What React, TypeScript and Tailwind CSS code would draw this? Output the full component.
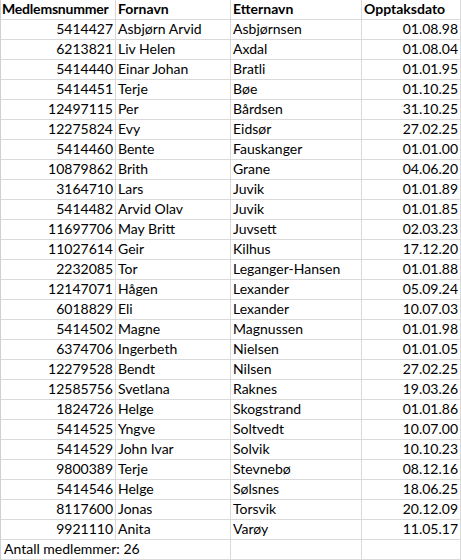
import React from 'react';

type Member = {
    id: string;
    first: string;
    last: string;
    joined: string;
};

const members: Member[] = [
    { id: '5414427', first: 'Asbjørn Arvid', last: 'Asbjørnsen', joined: '01.08.98' },
    { id: '6213821', first: 'Liv Helen', last: 'Axdal', joined: '01.08.04' },
    { id: '5414440', first: 'Einar Johan', last: 'Bratli', joined: '01.01.95' },
    { id: '5414451', first: 'Terje', last: 'Bøe', joined: '01.10.25' },
    { id: '12497115', first: 'Per', last: 'Bårdsen', joined: '31.10.25' },
    { id: '12275824', first: 'Evy', last: 'Eidsør', joined: '27.02.25' },
    { id: '5414460', first: 'Bente', last: 'Fauskanger', joined: '01.01.00' },
    { id: '10879862', first: 'Brith', last: 'Grane', joined: '04.06.20' },
    { id: '3164710', first: 'Lars', last: 'Juvik', joined: '01.01.89' },
    { id: '5414482', first: 'Arvid Olav', last: 'Juvik', joined: '01.01.85' },
    { id: '11697706', first: 'May Britt', last: 'Juvsett', joined: '02.03.23' },
    { id: '11027614', first: 'Geir', last: 'Kilhus', joined: '17.12.20' },
    { id: '2232085', first: 'Tor', last: 'Leganger-Hansen', joined: '01.01.88' },
    { id: '12147071', first: 'Hågen', last: 'Lexander', joined: '05.09.24' },
    { id: '6018829', first: 'Eli', last: 'Lexander', joined: '10.07.03' },
    { id: '5414502', first: 'Magne', last: 'Magnussen', joined: '01.01.98' },
    { id: '6374706', first: 'Ingerbeth', last: 'Nielsen', joined: '01.01.05' },
    { id: '12279528', first: 'Bendt', last: 'Nilsen', joined: '27.02.25' },
    { id: '12585756', first: 'Svetlana', last: 'Raknes', joined: '19.03.26' },
    { id: '1824726', first: 'Helge', last: 'Skogstrand', joined: '01.01.86' },
    { id: '5414525', first: 'Yngve', last: 'Soltvedt', joined: '10.07.00' },
    { id: '5414529', first: 'John Ivar', last: 'Solvik', joined: '10.10.23' },
    { id: '9800389', first: 'Terje', last: 'Stevnebø', joined: '08.12.16' },
    { id: '5414546', first: 'Helge', last: 'Sølsnes', joined: '18.06.25' },
    { id: '8117600', first: 'Jonas', last: 'Torsvik', joined: '20.12.09' },
    { id: '9921110', first: 'Anita', last: 'Varøy', joined: '11.05.17' },
];

// widths include the right gridline
const cell = 'shrink-0 h-5 border-r border-b border-[#dadada] px-[2px] flex items-end pb-[1px] whitespace-nowrap overflow-hidden';
const c1 = `${cell} w-[115px]`;
const c2 = `${cell} w-[115px]`;
const c3 = `${cell} w-[131px]`;
const c4 = `${cell} w-[99px]`;

const App: React.FC = () => {
    return (
        <div className="w-[461px] h-[560px] bg-white overflow-hidden text-[14px] leading-[18px] text-black font-['Lato',sans-serif]">
            <div className="border-l border-[#d0d0d0] flex flex-col">
                <div className="flex font-bold">
                    <div className={`${c1} !px-[1px] tracking-[-0.2px]`}>Medlemsnummer</div>
                    <div className={c2}>Fornavn</div>
                    <div className={c3}>Etternavn</div>
                    <div className={c4}>Opptaksdato</div>
                </div>

                {members.map(m => (
                    <div key={m.id} className="flex">
                        <div className={`${c1} justify-end`}>{m.id}</div>
                        <div className={c2}>{m.first}</div>
                        <div className={c3}>{m.last}</div>
                        <div className={`${c4} justify-end`}>{m.joined}</div>
                    </div>
                ))}

                {/* text overflows into the next cell, like in the sheet */}
                <div className="flex">
                    <div className={`${cell} w-[230px] !px-[3px]`}>Antall medlemmer: 26</div>
                    <div className={c3}></div>
                    <div className={c4}></div>
                </div>
            </div>
        </div>
    );
};

export default App;
